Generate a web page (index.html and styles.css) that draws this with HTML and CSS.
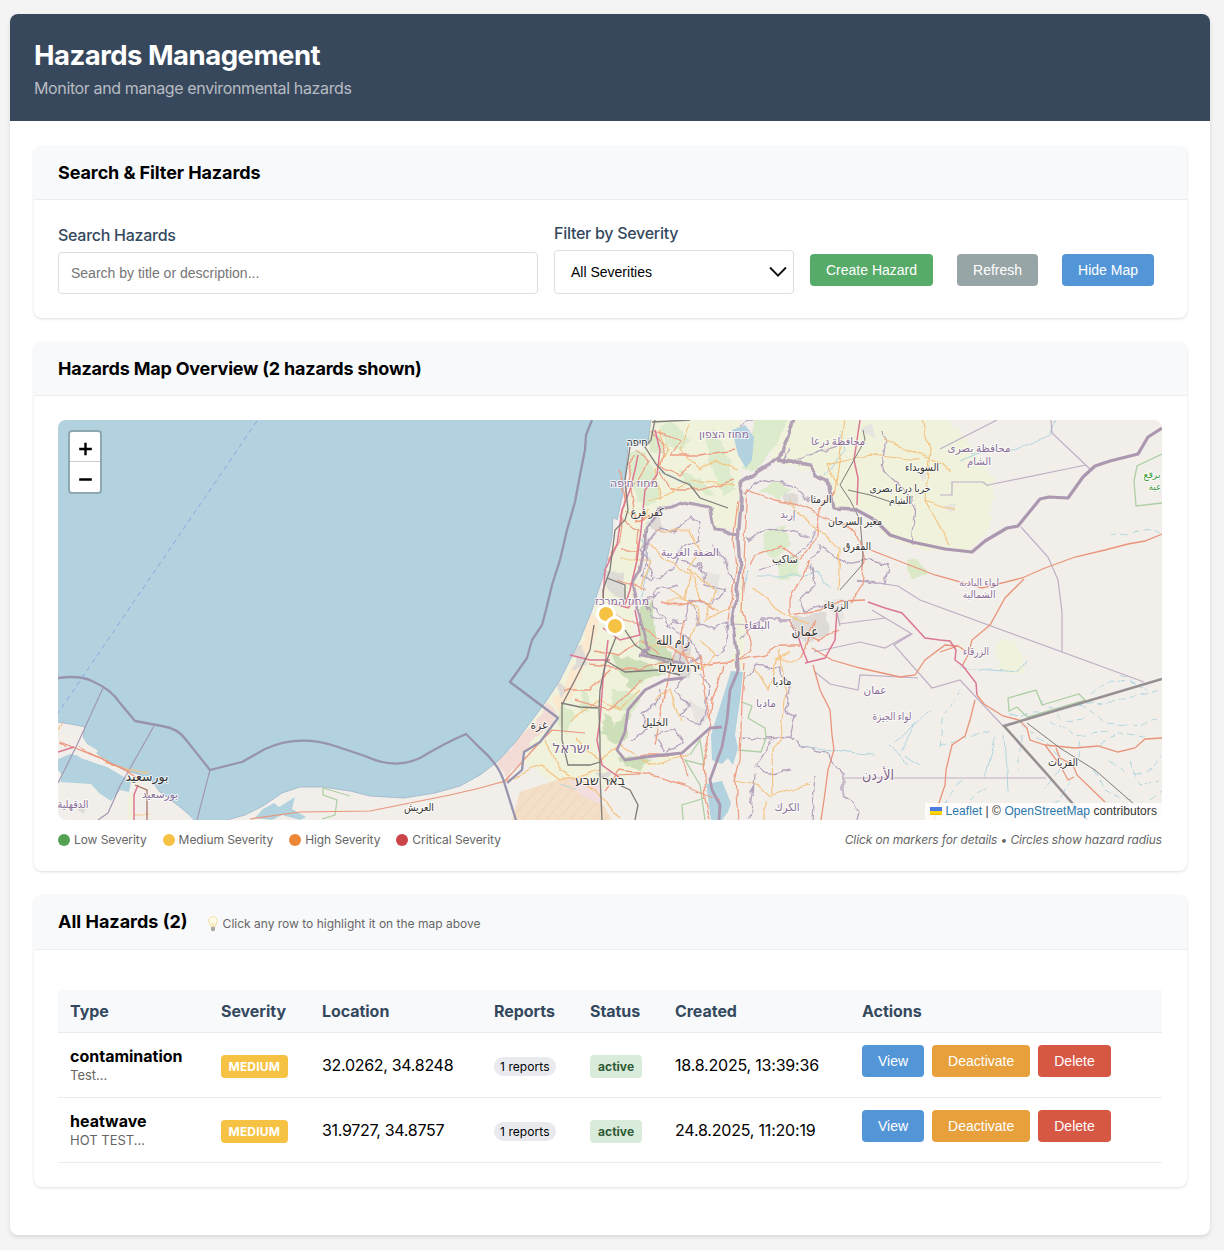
FILE: index.html
```html
<!DOCTYPE html>
<html lang="en">
<head>
<meta charset="utf-8">
<title>Hazards Management</title>
<link rel="stylesheet" href="styles.css">
</head>
<body>
<main class="page">
  <header class="page-header">
    <h1>Hazards Management</h1>
    <p>Monitor and manage environmental hazards</p>
  </header>
  <div class="page-body">
    <section class="card">
      <div class="card-header"><h2>Search &amp; Filter Hazards</h2></div>
      <div class="card-body filters">
        <div class="field field-search">
          <label for="q">Search Hazards</label>
          <input id="q" type="text" placeholder="Search by title or description...">
        </div>
        <div class="field field-severity">
          <label>Filter by Severity</label>
          <div class="select"><span>All Severities</span>
            <svg width="18" height="12" viewBox="0 0 18 12"><path d="M1 1.5 9 9.7 17 1.5" fill="none" stroke="#111" stroke-width="1.9"/></svg>
          </div>
        </div>
        <div class="filter-actions">
          <button class="btn green">Create Hazard</button>
          <button class="btn gray">Refresh</button>
          <button class="btn blue">Hide Map</button>
        </div>
      </div>
    </section>

    <section class="card">
      <div class="card-header"><h2 class="map-title">Hazards Map Overview (2 hazards shown)</h2></div>
      <div class="card-body map-body">
        <div class="map">
          <svg class="tiles" width="1104" height="400" viewBox="58 420 1104 400">
            <defs>
              <filter id="rough" x="0" y="0" width="100%" height="100%">
                <feTurbulence type="fractalNoise" baseFrequency="0.09" numOctaves="2" seed="4"/>
                <feDisplacementMap in="SourceGraphic" scale="9" xChannelSelector="R" yChannelSelector="G"/>
              </filter>
              <filter id="wavy" x="0" y="0" width="100%" height="100%">
                <feTurbulence type="fractalNoise" baseFrequency="0.07" numOctaves="1" seed="9"/>
                <feDisplacementMap in="SourceGraphic" scale="8" xChannelSelector="R" yChannelSelector="G"/>
              </filter>
              <pattern id="hatch" width="9" height="9" patternUnits="userSpaceOnUse" patternTransform="rotate(40)">
                <rect width="9" height="9" fill="#f3dfc7"/><path d="M0 0V9" stroke="#f0c9b0" stroke-width="1"/>
              </pattern>
            </defs>
            <rect x="58" y="420" width="1104" height="400" fill="#f2efea"/>

            <!-- farmland and woodland -->
            <g filter="url(#rough)">
              <path fill="#f0f2dc" d="M653 410H740L740 530 715 530 708 505 678 500 650 520 640 560 632 620 640 650 670 665 640 690 625 720 615 752 640 760 690 752 640 772 600 790 560 790 530 765 500 765 560 680 600 600 620 520Z"/>
              <path fill="#f0f2dc" d="M790 410H915L960 430 993 480 990 530 968 552 930 550 890 540 866 510 835 508 830 490 815 470 785 465 770 460Z"/>
              <path fill="#f0f2dc" d="M915 410H950L958 470 930 480ZM740 560 745 640 742 668 732 668 738 610ZM995 642 1012 640 1022 655 1025 672 1000 672Z"/>
              <path fill="#dcebcb" d="M660 425 672 422 690 440 680 450 665 445ZM705 438 715 430 728 455 735 490 722 495 712 470ZM680 470 700 478 715 495 690 488ZM630 452 645 450 658 480 662 498 640 505 632 485ZM755 415H790L780 440 755 470 742 470ZM760 490 778 482 790 490 780 500ZM765 530 785 525 790 545 775 560 762 550ZM775 560 795 555 800 575 780 580Z"/>
              <path fill="#cddfb8" d="M612 655 640 660 665 672 645 680 632 690 625 680ZM606 712 615 725 632 710 625 738 615 745 600 732ZM638 610 650 600 658 640 675 660 662 668 640 650ZM620 757 650 758 640 770 625 766Z"/>
              <path fill="#dbe9c9" d="M610 690 630 690 640 700 632 712 614 710ZM645 430 660 435 665 455 650 450ZM560 700 572 712 567 735 558 728ZM582 690 590 700 588 712 580 708ZM905 562 920 560 927 575 912 580Z"/>
              <path fill="#fbe8cf" d="M583 640 590 615 598 620 592 650 575 690 560 712 552 700 565 685Z"/>
              <path fill="#f3dcd5" d="M497 762 530 727 550 703 558 715 550 727 530 740 520 760 505 782Z"/>
              <path fill="#dedbd7" d="M573 650 582 645 586 665 575 670ZM556 680 566 688 560 700ZM603 570 625 575 625 600 608 590ZM793 615 825 612 828 635 805 645 793 635ZM673 645 690 645 690 680 675 675ZM786 492 798 496 795 508 785 505ZM645 525 660 515 665 535ZM595 772 610 770 607 785Z"/>
              <path fill="#e8e5e1" d="M700 575 720 572 718 595ZM688 700 708 712 700 730ZM860 430 872 425 875 440ZM920 470 930 475 922 482ZM945 505 955 505 953 515ZM823 600 845 600 840 625Z"/>
            </g>
            <path fill="url(#hatch)" d="M512 820 520 792 566 777 595 790 612 820Z"/>
            <path fill="#f2dede" d="M567 777 600 785 602 805 580 795Z"/>

            <!-- water -->
            <path fill="#b1d2de" stroke="#9fb3cc" stroke-width=".8" d="M50 410H652L648 443 628 446 626 467 623 493 617 520 613 517 612 537 605 570 592 610 580 640 560 680 545 703 530 723 513 745 497 762 480 775 460 786 435 793 404 798 370 796 350 791 323 787 300 787 282 793 263 806 245 815 223 821H195C188 812 172 801 160 792L152 781 138 774 124 770 106 760 93 750 83 738 85 727 76 725 58 722 50 722Z"/>
            <path fill="#b1d2de" d="M58 759 70 754 85 757 109 768 124 777 131 782 129 792 120 790 111 801 99 793 91 784 60 782 62 775 58 770ZM255 818 263 809 274 803 279 807 295 797 292 809 306 817 300 820 282 815 272 820ZM732 430 745 425 754 437 752 460 746 468 738 455Z"/>
            <path fill="#b1d2de" d="M731 671 743 672 740 700 735 735 738 748 733 765 728 758 722 764 712 760 711 735 722 700ZM706 784 722 781 731 803 728 812 722 820 711 820Z"/>
            <path fill="none" stroke="#f2efea" stroke-width="3" d="M75 728 86 745 97 752M62 740 70 729 74 742M58 750 70 748 82 757 103 764"/>
            <path fill="#dedbd7" d="M78 803 86 805 84 814 78 810Z"/>
            <path fill="#f0f2dc" d="M128 797 134 792 134 820 128 820Z"/>

            <!-- streams -->
            <g fill="none" stroke="#a9d3df" stroke-width=".9" filter="url(#wavy)">
              <path d="M960 460 990 450 1015 452 1050 435 1058 415M756 576H800L818 572 830 588M800 746 850 752 875 755M960 668 1020 672 1028 660M895 742 930 710M900 750 915 722M905 755 920 765M888 746 910 764M995 735 985 775M1005 735 1008 790"/>
              <path stroke-dasharray="7 4" d="M940 745 990 730M960 780 935 820M970 800 985 790M1110 537 1125 534 1150 530 1162 532M1010 715 1045 712 1080 705 1120 700 1160 690M1020 725 1045 742 1060 758M1050 720 1075 735 1110 732M1080 705 1105 722 1140 725 1160 720M1090 695 1110 680 1150 685M1100 745 1120 732 1150 738M1130 760 1140 785 1160 780M1135 775 1150 770 1162 755M1070 780 1060 800 1040 810M1060 770 1045 790M1095 770 1105 790 1130 800M1150 800 1162 790M1110 760 1125 772M1040 700 1065 720 1085 718M1120 675 1145 690M1080 740 1075 765M1020 735 1020 770M960 690 942 720 940 750"/>
              <path d="M642 540 650 560 640 600M560 785 575 790M742 590 748 570M660 470 690 485M840 430 845 450 825 475"/>
            </g>

            <!-- administrative limits -->
            <g fill="none" stroke="#b5a3bd" stroke-width="1.3" filter="url(#rough)">
              <path d="M648 540 660 528 675 532 690 515 700 522 698 540 680 548 672 570 655 580 648 565ZM680 560 700 565 705 585 725 590 712 605 690 600 685 620 668 625 660 612 650 605 655 590 678 585M712 545 725 560 735 585M690 600 700 625 715 630 728 620 725 650 715 655M665 625 690 640 700 655 692 665"/>
              <path d="M655 535 640 550 650 560 640 575 655 582M660 595 645 600 650 615 662 620M690 640 680 655 688 670 675 690 690 705 680 715 700 725 710 690 700 672M630 740 650 728 640 715 655 705 662 690M665 750 655 735 672 728 685 742 660 755"/>
              <path d="M742 495 760 480 790 485 810 500M748 540 765 528 790 530 810 538M760 570 790 560 810 542 815 528M810 560 820 545 845 565 865 560 890 565M810 565 815 585 800 600 805 610 830 605M888 565 885 585 856 580M740 640 760 620 790 620 798 640M745 680 755 665 780 668 790 690 785 710 795 715 790 738M742 738 770 740 788 738 805 748 825 752 843 775M770 742 755 765 765 775 790 770M755 775 750 820M815 775 812 820M843 775 843 795 860 812 858 820"/>
              <path d="M883 430 885 445 882 470 900 485 916 505 912 545M795 460 840 445M740 425 760 415M800 465 780 460 790 450"/>
            </g>
            <g fill="none" stroke="#bfaec5" stroke-width="1.2">
              <path d="M1051 420 1052 433 1091 470M988 485 1086 465M940 449 997 420M940 495H952V482H983L988 486M1021 527 1048 557 1058 580 1062 612V652M857 580 898 586 920 600 1144 682M730 624 760 625M839 624 885 618M840 626 836 608M872 610 912 634 894 645 932 688 960 680 1003 726M844 778H1046M815 672 830 684 858 690 860 675 918 678M814 652 860 642 885 648 910 634"/>
              <path d="M103 688 77 745 58 783M154 726 120 786 108 813 98 820M210 770 197 820" stroke="#a497b5"/>
            </g>
            <path fill="none" stroke="#adcfa5" stroke-width="1.3" d="M1162 454 1137 466 1134 481 1136 506 1162 503M322 819 335 815 337 800 323 795V788L350 796M742 702 752 706 748 718 765 728 766 738 761 752 738 750M1008 698 1036 690 1042 705 1079 694 1085 700 1027 717 1017 707 1009 711ZM690 755 700 740 704 765 685 760 700 785 705 820M683 820 682 805 705 798"/>

            <!-- motorways, trunk and secondary roads -->
            <g fill="none" stroke="#f4c483" stroke-width="1.2" filter="url(#wavy)">
              <path d="M660 430 668 450 655 470 660 500M690 425 680 450 700 470 715 460 738 470M650 500 670 495 690 480 735 485M625 510 640 520 650 510M620 560 650 560 640 590M655 530 690 530 700 550 688 570 715 590 705 620 735 605M650 545 665 560 690 575 685 600 665 600M670 590 700 610 690 640M640 640 655 645 690 655 700 670M570 720 600 700 620 710 640 690M575 740 600 760 620 745 650 765 690 755M500 782 540 765 560 780 600 770M545 740 560 770 595 790 620 820M655 700 670 690 680 720M690 570 700 600 720 610"/>
              <path d="M835 490 845 420M838 485 826 465 870 455 920 460M790 500 800 515 840 550 838 590M885 440 922 455 950 470M925 500 955 510M922 420 930 450 925 500 950 545M755 670 768 690 775 665 790 650M780 650 785 690 780 740 772 750 773 795 790 790 810 785M735 780 760 785 772 797M765 800 765 820M750 588 775 605 785 615 810 625M775 660 800 660M700 640 715 655 700 670M610 420 610 410"/>
              <path d="M58 730 62 722M105 758 115 765 128 770 150 773M134 815H150"/>
            </g>
            <g fill="none" stroke="#ee9f84" stroke-width="1.3" filter="url(#wavy)">
              <path d="M655 430 680 440 670 455 700 455 735 450M652 430 665 445 660 465 680 475 690 465M660 472 670 490 700 490 735 480M635 450 650 460 632 490 637 520 650 515M633 455 620 520 640 530 637 560M620 550 640 550M618 580 645 590M618 470 624 500 617 545 607 560M610 610 625 620 650 630 665 645 700 665 725 662 735 660M595 650 620 655 640 640 660 655M565 690 590 690 610 670M575 700 610 710 640 680M590 665 640 670 670 660M605 790 620 770 650 775 685 785 720 800"/>
              <path d="M738 500 733 540 736 570 728 620M725 665 712 700 708 740 703 760 705 800 710 820M738 660 752 650 742 610 745 540 748 490 775 500 800 505 820 515 855 530 860 540M750 565 755 555 780 545 800 560 815 540 820 510 835 490M810 560 800 580 790 600 790 615 820 610 840 600M740 660 765 655 780 645 800 645M790 620 800 635 820 640 840 630M815 620 800 660M745 665 742 700 740 760 735 780 738 820M860 540 865 560 862 585 850 605"/>
              <path d="M58 742 66 746M80 748 110 762 130 772M700 655 705 690 710 720M675 650 668 680 660 720 655 745M640 755 680 755 690 780M685 620 680 640 690 670M660 600 680 605 700 600 715 610"/>
            </g>
            <g fill="none" stroke="#e9947a" stroke-width="1.3">
              <path d="M868 549 935 575 982 588 1022 578 1045 568 1075 557 1105 550 1128 544 1145 541 1162 534M1024 579 1005 598 990 625 972 640 968 655 962 666M940 652 958 646 964 650M840 601 865 600M812 648 832 660 860 668 900 677 915 675 925 660 945 645 958 646M813 665 820 690 830 710 832 735 834 750 828 770 824 800 821 820M977 695 984 704 1003 716 1019 720 1027 728 1030 740 1045 745 1075 748 1098 746 1118 752 1135 748 1145 739 1162 738M975 700 970 720 965 736 952 745 946 770 945 785 940 800 934 820M1056 748 1060 758 1073 765 1077 775 1105 802M1045 745 1060 765 1068 780 1074 777"/>
              <path d="M480 788 505 781 540 742M540 742 552 730 585 733M615 775 640 774M480 788 450 795 410 803 370 811 300 812 250 819M60 742 75 748 100 758 125 770 140 780" stroke-width="1.2"/>
            </g>
            <g fill="none" stroke="#dc7693" stroke-width="1.5">
              <path d="M860 420 854 460 858 478 857 505M808 663 802 648 798 636M805 663 825 658 835 640 837 610M868 602 885 608 902 613 925 638 940 640 950 641 956 650 955 660 963 666 976 683 977 695M638 455 635 470 630 490 622 510 617 545 605 570 603 598M655 430 660 450 657 475 645 490 641 530 637 560 630 590 625 605M603 628 620 640 640 635 635 610M608 640 605 665 603 680 600 720 597 740 602 765 620 778M570 655 590 660 610 660M612 603 628 608 635 600M58 752 74 747M134 820 134 795 138 785"/>
            </g>
            <g fill="none" stroke="#7f7b79" stroke-width="1.3">
              <path d="M652 422 690 420M655 420 651 440 645 447 656 464 665 474 690 485 700 498 728 508M630 447 625 480 628 510 625 520 615 530 610 570 603 590 604 610M607 578 625 585 625 600M616 637 605 665 600 690 599 710 600 740 600 775 602 820M594 625 590 650 575 680 562 705 562 740 568 765 590 765 600 762M602 777 630 790 638 805 635 820M625 630 635 645 650 655 673 660M605 660 625 672 660 670 680 675M561 703 580 707 598 708"/>
              <path d="M863 430 865 440 840 485 850 500 860 520 863 555 862 565 840 590M848 490 870 495 900 505M1027 723 1060 748 1095 770 1135 805" stroke-width="1"/>
              <path d="M147 820 147 790 135 785" stroke="#a87465"/>
            </g>

            <!-- national borders -->
            <g fill="none" stroke="#ab97b0" stroke-linejoin="round">
              <g stroke-width="3.4" opacity=".9" filter="url(#wavy)">
                <path d="M741 512 742 500 740 483 760 470 780 458 795 415M778 460 810 465 815 475 828 480 833 508 855 509M742 490 738 540 740 570 733 620 737 650 738 671"/>
                <path stroke-width="2.8" d="M740 533 715 530 710 508 678 502 660 510 646 528 645 545 640 570 632 585 638 610 648 650 640 655 665 660 685 665"/>
              </g>
              <path stroke-width="3.2" d="M855 509 875 520 890 535 912 542 945 549 972 552 985 541 1007 528 1018 526 1040 499 1049 497 1068 498 1083 477 1095 466 1110 461 1138 454 1148 437 1162 428"/>
              <path stroke-width="2.8" d="M738 671 730 690 727 720 722 747 710 780 712 790 720 805 719 820M722 727 710 728 682 753 645 757 625 760 617 750 625 732 628 710 645 690 665 680 683 678"/>
            </g>
            <path fill="none" stroke="#9893ae" stroke-width="2.3" stroke-linejoin="round" d="M592 420 586 435 585 450 580 475 575 502 567 530 560 560 552 585 547 606 542 625 532 640 527 658 510 682 558 718 540 742 524 752 522 770 507 783M58 678Q80 675 92 681Q112 690 120 703L135 721 162 726Q178 728 187 741L210 770 242 762 265 749Q298 734 335 746L365 756Q395 770 420 758Q445 743 466 734L480 748Q500 765 505 785L516 820"/>
            <path fill="none" stroke="#969093" stroke-width="2.6" d="M1162 679 1004 726 1046 773 1087 820"/>
            <path fill="none" stroke="#8fa7df" stroke-width="1" stroke-dasharray="5 4" d="M257 421 58 713"/>

            <!-- place names -->
            <g class="names city" text-anchor="middle">
              <text x="637" y="446" textLength="21" lengthAdjust="spacingAndGlyphs">חיפה</text>
              <text x="647" y="516" textLength="33" lengthAdjust="spacingAndGlyphs">كفر قرع</text>
              <text x="922" y="471" textLength="34" lengthAdjust="spacingAndGlyphs">السويداء</text>
              <text class="tight" x="900" y="491.500" textLength="61" lengthAdjust="spacingAndGlyphs">خربا درعا بصرى</text>
              <text class="tight" x="900" y="504" textLength="22" lengthAdjust="spacingAndGlyphs">الشام</text>
              <text x="821" y="503" textLength="21" lengthAdjust="spacingAndGlyphs">الرمثا</text>
              <text x="855" y="525" textLength="54" lengthAdjust="spacingAndGlyphs">مغير السرحان</text>
              <text x="857" y="550" textLength="28" lengthAdjust="spacingAndGlyphs">المفرق</text>
              <text x="785" y="563" textLength="26" lengthAdjust="spacingAndGlyphs">ساكب</text>
              <text x="836" y="609" textLength="25" lengthAdjust="spacingAndGlyphs">الزرقاء</text>
              <text x="782" y="685" textLength="19" lengthAdjust="spacingAndGlyphs">مادبا</text>
              <text x="655" y="726" textLength="26" lengthAdjust="spacingAndGlyphs">الخليل</text>
              <text x="539" y="729" textLength="17" lengthAdjust="spacingAndGlyphs">غزة</text>
              <text x="1063" y="766" textLength="30" lengthAdjust="spacingAndGlyphs">القريات</text>
              <text x="419" y="811" textLength="30" lengthAdjust="spacingAndGlyphs">العريش</text>
            </g>
            <g class="names big" text-anchor="middle">
              <text x="673" y="645" textLength="34" lengthAdjust="spacingAndGlyphs">رام الله</text>
              <text x="679" y="672" textLength="42" lengthAdjust="spacingAndGlyphs">ירושלים</text>
              <text x="600" y="785" textLength="50" lengthAdjust="spacingAndGlyphs">באר שבע</text>
              <text x="805" y="636" textLength="27" lengthAdjust="spacingAndGlyphs">عمان</text>
              <text x="147" y="781" textLength="43" lengthAdjust="spacingAndGlyphs">بورسعيد</text>
            </g>
            <g class="names region" text-anchor="middle">
              <text x="724" y="438" textLength="50" lengthAdjust="spacingAndGlyphs">מחוז הצפון</text>
              <text x="634" y="487" textLength="48" lengthAdjust="spacingAndGlyphs">מחוז חיפה</text>
              <text x="622" y="605" textLength="54" lengthAdjust="spacingAndGlyphs">מחוז המרכז</text>
              <text x="690" y="556" textLength="58" lengthAdjust="spacingAndGlyphs">الضفة الغربية</text>
              <text x="838" y="445" textLength="54" lengthAdjust="spacingAndGlyphs">محافظة درعا</text>
              <text x="979" y="452" textLength="63" lengthAdjust="spacingAndGlyphs">محافظة بصرى</text>
              <text x="979" y="465" textLength="24" lengthAdjust="spacingAndGlyphs">الشام</text>
              <text x="788" y="518" textLength="15" lengthAdjust="spacingAndGlyphs">إربد</text>
              <text class="tight" x="979" y="585.500" textLength="40" lengthAdjust="spacingAndGlyphs">لواء البادية</text>
              <text class="tight" x="979" y="598" textLength="33" lengthAdjust="spacingAndGlyphs">الشمالية</text>
              <text x="757" y="629" textLength="26" lengthAdjust="spacingAndGlyphs">البلقاء</text>
              <text x="976" y="655" textLength="26" lengthAdjust="spacingAndGlyphs">الزرقاء</text>
              <text x="875" y="694" textLength="23" lengthAdjust="spacingAndGlyphs">عمان</text>
              <text x="766" y="707" textLength="20" lengthAdjust="spacingAndGlyphs">مادبا</text>
              <text x="892" y="720" textLength="39" lengthAdjust="spacingAndGlyphs">لواء الجيزة</text>
              <text x="787" y="811" textLength="25" lengthAdjust="spacingAndGlyphs">الكرك</text>
              <text x="160" y="798" textLength="36" lengthAdjust="spacingAndGlyphs">بورسعيد</text>
              <text x="73" y="808" textLength="31" lengthAdjust="spacingAndGlyphs">الدقهلية</text>
            </g>
            <g class="names country" text-anchor="middle">
              <text x="571" y="753" textLength="37" lengthAdjust="spacingAndGlyphs">ישראל</text>
              <text x="878" y="780" textLength="32" lengthAdjust="spacingAndGlyphs">الأردن</text>
            </g>
            <g class="names park" text-anchor="middle">
              <text class="tight" x="1152" y="477.500" textLength="17" lengthAdjust="spacingAndGlyphs">برقع</text>
              <text class="tight" x="1155" y="490" textLength="13" lengthAdjust="spacingAndGlyphs">عية</text>
            </g>

            <g fill="#f6c244" stroke="#fff" stroke-width="3">
              <circle cx="606" cy="614" r="8.500"/><circle cx="615" cy="626" r="8.500"/>
            </g>
          </svg>
          <div class="zoom">
            <span><svg width="14" height="14" viewBox="0 0 14 14"><path d="M7.500.7V13.300M1.200 7H13.800" stroke="#000" stroke-width="2.400"/></svg></span>
            <span><svg width="14" height="14" viewBox="0 0 14 14"><path d="M1.200 6.500H13.800" stroke="#000" stroke-width="2.400"/></svg></span>
          </div>
          <div class="attribution"><svg width="12" height="8" viewBox="0 0 12 8"><path fill="#4C7BE1" d="M0 0h12v4H0z"/><path fill="#FFD500" d="M0 4h12v3H0z"/><path fill="#E0BC00" d="M0 7h12v1H0z"/></svg> <a>Leaflet</a> | © <a>OpenStreetMap</a> contributors</div>
        </div>
        <div class="legend">
          <span class="key"><i class="dot low"></i>Low Severity</span>
          <span class="key"><i class="dot medium"></i>Medium Severity</span>
          <span class="key"><i class="dot high"></i>High Severity</span>
          <span class="key"><i class="dot critical"></i>Critical Severity</span>
          <em>Click on markers for details • Circles show hazard radius</em>
        </div>
      </div>
    </section>

    <section class="card">
      <div class="card-header list-header"><h2>All Hazards (2)</h2>
        <svg class="bulb" width="10" height="16" viewBox="0 0 10 16"><path d="M5 .6C2.500.6.7 2.500.7 4.900.7 7.400 2.800 8.500 3 11h4c.2-2.500 2.300-3.600 2.300-6.100C9.300 2.500 7.500.6 5 .6Z" fill="#fffbe6" stroke="#f0dda0" stroke-width=".9"/><path d="M3.800 6.500 4.400 11M6.200 6.500 5.600 11" stroke="#ead28a" stroke-width=".6"/><path d="M3 11h4v2.800L6 15.200H4L3 13.800Z" fill="#aaa9a4"/></svg>
        <small>Click any row to highlight it on the map above</small>
      </div>
      <div class="card-body list-body">
        <table>
          <colgroup><col class="c1"><col class="c2"><col class="c3"><col class="c4"><col class="c5"><col class="c6"><col class="c7"></colgroup>
          <thead><tr><th>Type</th><th>Severity</th><th>Location</th><th>Reports</th><th>Status</th><th>Created</th><th>Actions</th></tr></thead>
          <tbody>
            <tr>
              <td><strong>contamination</strong><div class="desc">Test...</div></td>
              <td><span class="badge severity">MEDIUM</span></td>
              <td class="coords">32.0262, 34.8248</td>
              <td><span class="reports">1 reports</span></td>
              <td><span class="badge status">active</span></td>
              <td>18.8.2025, 13:39:36</td>
              <td><div class="actions"><button class="btn blue">View</button><button class="btn orange">Deactivate</button><button class="btn red">Delete</button></div></td>
            </tr>
            <tr>
              <td><strong>heatwave</strong><div class="desc">HOT TEST...</div></td>
              <td><span class="badge severity">MEDIUM</span></td>
              <td class="coords">31.9727, 34.8757</td>
              <td><span class="reports">1 reports</span></td>
              <td><span class="badge status">active</span></td>
              <td>24.8.2025, 11:20:19</td>
              <td><div class="actions"><button class="btn blue">View</button><button class="btn orange">Deactivate</button><button class="btn red">Delete</button></div></td>
            </tr>
          </tbody>
        </table>
      </div>
    </section>
  </div>
</main>
</body>
</html>
```
FILE: styles.css
```css
* { box-sizing: border-box; }
body { margin: 0; padding: 14px 14px 15px 10px; background: #f4f4f4; font: 16px/20px Inter, "Liberation Sans", sans-serif; color: #000; }
h1, h2, p { margin: 0; }
.page { width: 1200px; height: 1221px; background: #fff; border-radius: 8px; overflow: hidden; box-shadow: 0 2px 4px rgba(0,0,0,.12); }
.page-header { height: 107px; padding: 24px; background: #37485d; color: #fff; }
h1 { font-size: 27.5px; line-height: 35px; font-weight: 700; letter-spacing: -.5px; }
.page-header p { margin-top: 5px; color: #b8bcc1; letter-spacing: -.37px; }
.page-body { padding: 25px 23px 0 24px; display: flex; flex-direction: column; gap: 24px; }
.card { border-radius: 8px; background: #fff; box-shadow: 0 1px 3px rgba(0,0,0,.13); overflow: hidden; }
.card-header { height: 54px; padding: 0 24px; display: flex; align-items: center; background: #f8f9fb; border-bottom: 1px solid #ebedef; }
h2 { font-size: 18px; line-height: 22px; font-weight: 650; letter-spacing: -.1px; }
.map-title { letter-spacing: -.2px; }
.card-body { padding: 24px 25px 24px 24px; }
.filters { height: 118px; display: flex; align-items: flex-end; gap: 16px; }
.field { display: flex; flex-direction: column; color: #34495e; }
.field label { margin-bottom: 7px; line-height: 20px; font-weight: 500; letter-spacing: -.27px; }
.field-search { width: 480px; }
.field-severity { width: 240px; }
.field input, .select { border: 1px solid #ddd; border-radius: 4px; background: #fff; font: 14px "Liberation Sans", sans-serif; }
.field input { height: 42px; padding: 0 12px; }
.field input::placeholder { color: #757575; }
.select { height: 44px; padding: 0 6px 0 16px; display: flex; align-items: center; justify-content: space-between; color: #000; }
.filter-actions { display: flex; gap: 24px; margin-bottom: 8px; }
.btn { height: 32px; padding: 0 16px; border: 0; border-radius: 4px; color: #fff; font: 14px "Liberation Sans", sans-serif; white-space: nowrap; }
.green { background: #56ab68; }
.gray { background: #98a5a6; }
.blue { background: #5296d7; }
.orange { background: #e7a03c; }
.red { background: #d75745; }

.map-body { height: 475px; }
.map { position: relative; height: 400px; border-radius: 8px; overflow: hidden; }
.tiles { display: block; }
.names { font-family: "Noto Sans", "DejaVu Sans", sans-serif; font-size: 11px; paint-order: stroke; stroke: rgba(255,255,255,.75); stroke-width: 2px; stroke-linejoin: round; }
.names .tight { font-size: 10px; }
.city, .big { fill: #333; }
.big { font-size: 13px; }
.region { fill: #8a6d98; }
.country { fill: #7d6288; font-size: 14px; }
.park { fill: #3f9b3f; }
.zoom { position: absolute; left: 10px; top: 10px; width: 34px; border: 2px solid #8ea7b1; border-radius: 4px; background: #fff; }
.zoom span { height: 30px; display: flex; align-items: center; justify-content: center; padding-top: 5px; }
.zoom span:first-child { border-bottom: 1px solid #ccc; }
.attribution { position: absolute; right: 0; bottom: 0; padding: 0 5px; background: rgba(255,255,255,.8); font: 12px/17px "Liberation Sans", sans-serif; letter-spacing: .07px; color: #333; white-space: nowrap; }
.attribution a { color: #2a78ab; }
.legend { margin-top: 12px; height: 15px; display: flex; gap: 16px; font-size: 12px; line-height: 15px; letter-spacing: -.07px; color: #666; }
.key { display: flex; align-items: center; gap: 4px; }
.dot { width: 12px; height: 12px; border-radius: 50%; }
.low { background: #54a353; }
.medium { background: #f6c244; }
.high { background: #ed8637; }
.critical { background: #ca4449; }
.legend em { margin-left: auto; letter-spacing: -.12px; }

.list-header { height: 55px; }
.list-header small { margin-top: 3px; color: #666; font-size: 12px; }
.bulb { margin: 3px 5px 0 20px; }
.list-header h2 { letter-spacing: 0; }
.list-body { padding-top: 40px; height: 237px; }
table { width: 1104px; table-layout: fixed; border-collapse: separate; border-spacing: 0; }
.c1 { width: 151px; } .c2 { width: 101px; } .c3 { width: 172px; } .c4 { width: 96px; } .c5 { width: 85px; } .c6 { width: 187px; } .c7 { width: 312px; }
th { height: 43px; padding: 0 12px; text-align: left; font-weight: 650; color: #34495e; background: #f8f9fb; border-bottom: 1px solid #e9ecef; letter-spacing: -.05px; }
td { height: 65px; padding: 0 12px; border-bottom: 1px solid #e9ecef; white-space: nowrap; letter-spacing: -.2px; }
.coords { letter-spacing: -.3px; }
strong { font-weight: 650; letter-spacing: 0; }
.desc { margin-top: 1px; font-size: 13px; line-height: 17px; color: #666; letter-spacing: 0; }
.badge { display: inline-block; margin-top: 3px; padding: 0 8px; height: 23px; line-height: 23px; border-radius: 4px; font-size: 12px; font-weight: 650; letter-spacing: .05px; vertical-align: middle; }
.severity { background: #f6c244; color: #fff; padding: 0 7.500px; letter-spacing: .2px; }
.status { background: #d9ebdb; color: #2d5a33; }
.reports { display: inline-block; margin-top: 3px; padding: 0 6px; height: 19px; line-height: 19px; border-radius: 10px; background: #e9eaee; font-size: 12px; letter-spacing: .07px; vertical-align: middle; }
.actions { display: flex; gap: 8px; margin-top: -9px; }
```
